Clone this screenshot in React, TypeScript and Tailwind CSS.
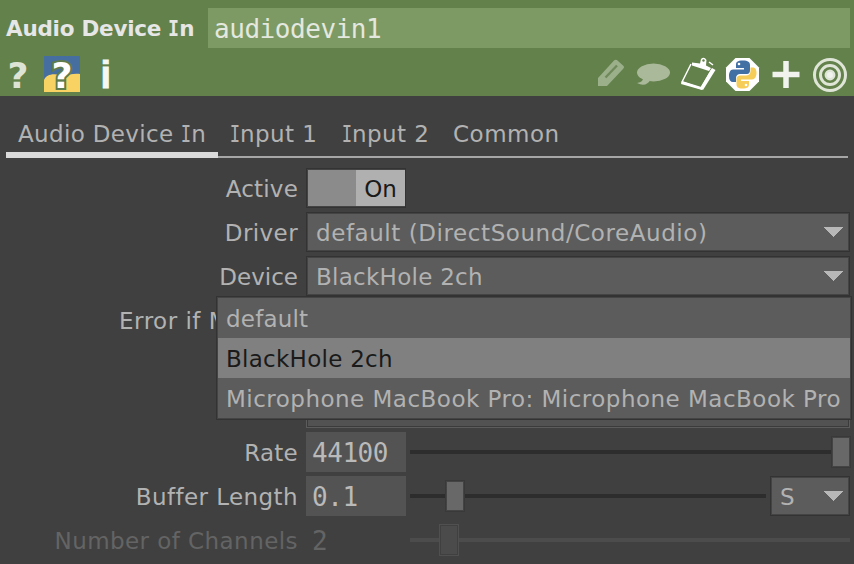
import React from "react";

const SANS = "font-['DejaVu_Sans',Verdana,sans-serif]";
const MONO = "font-['DejaVu_Sans_Mono',monospace] text-[26px] tracking-[-0.45px]";

/* Capital I with slab serifs, condensed to sit with the proportional letters */
function SlabI({ bold }: { bold?: boolean }) {
  return (
    <span className={`inline-block font-['DejaVu_Sans_Mono',monospace] tracking-normal ${bold ? "-mx-[1px] scale-x-85" : "-mx-[1.9px] scale-x-75"}`}>I</span>
  );
}

function Arrow() {
  return (
    <svg width="19" height="10" viewBox="0 0 19 10" className="mr-[6px] shrink-0" shapeRendering="crispEdges">
      <path d="M0 0H19L9.5 10Z" fill="#b8b8b8" />
    </svg>
  );
}

function Select({ children, className }: { children: React.ReactNode; className: string }) {
  return (
    <div className={`flex h-10 items-center justify-between border border-[#333333] bg-[#5c5c5c] pl-[9px] inset-ring inset-ring-[#444444] ${className}`}>
      <span className="pt-[2px] whitespace-nowrap">{children}</span>
      <Arrow />
    </div>
  );
}

function Row({ label, dim, spacing = "", children }: { label: string; dim?: boolean; spacing?: string; children?: React.ReactNode }) {
  return (
    <div className="flex h-11 items-center">
      <div className={`flex w-[298px] shrink-0 justify-end pt-[2px] whitespace-nowrap ${spacing} ${dim ? "text-[#646464]" : "text-[#b2b2b2]"}`}>{label}</div>
      <div className="ml-2 flex h-full w-[544px] items-center">{children}</div>
    </div>
  );
}

function Slider({ thumb, dim, className }: { thumb: string; dim?: boolean; className: string }) {
  return (
    <div className={`relative flex h-8 items-center ${className}`}>
      <div className={`h-1 w-full ${dim ? "bg-[#4c4c4c]" : "bg-[#2d2d2d]"}`} />
      <div className={`absolute top-0 h-8 w-5 border ${thumb} ${dim ? "border-[#505050] bg-[#4b4b4b] inset-ring inset-ring-[#404040]" : "border-[#393939] bg-[#686868] inset-ring inset-ring-[#444444]"}`} />
    </div>
  );
}

function Toolbar() {
  return (
    <div className="flex h-12 items-start justify-between">
      <svg width="120" height="48" viewBox="0 48 120 48">
        <g fontFamily="DejaVu Sans, sans-serif" fontWeight="700">
          <text x="7.5" y="88" fontSize="35" textLength="21" lengthAdjust="spacingAndGlyphs" fill="#dde4d6">?</text>
          <rect x="44" y="56" width="36" height="36" fill="#466f9f" />
          <path d="M44 80C46 75 52 73 60 75C67 76 72 73 80 74V92H44Z" fill="#f8d364" />
          <text x="51.5" y="88" fontSize="35" textLength="21" lengthAdjust="spacingAndGlyphs" fill="#ffffff" stroke="#5f7c4c" strokeWidth="4" paintOrder="stroke">?</text>
          <text x="100.5" y="88" fontSize="38" fontFamily="Liberation Sans, sans-serif" fill="#f5f7f3" stroke="#f5f7f3" strokeWidth="0.8">i</text>
        </g>
      </svg>
      <svg width="266" height="48" viewBox="588 48 266 48" fill="none">
        <path d="M598 78L614 60.500Q616 59 618 61L623 65.500Q625 67 623 69L607 86L598 86Z" fill="#9caf8b" />
        <path d="M605.500 77.500L617 65.500" stroke="#70895b" strokeWidth="2.400" />
        <ellipse cx="653.500" cy="72.500" rx="16.500" ry="9" fill="#a9b99a" />
        <path d="M643 77Q644 82 637 83Q646 88 651 79Z" fill="#a9b99a" />
        <path d="M691 64L682 82L701 88.500L712 69" stroke="#ffffff" strokeWidth="1.500" />
        <path d="M712 68L715.500 70L703 90L700 88Z" fill="#ffffff" />
        <path d="M692 62.500L700 63.500L701 59Q704 56 706.500 60L706 65.500L711 68L709 71L692 65.500Z" fill="#ffffff" />
        <path d="M709 62L713 65" stroke="#ffffff" strokeWidth="1.500" />
        <circle cx="703.500" cy="60.500" r="1.200" fill="#63814b" />
        <path d="M682 81L703 87.500L702 90L681 84Z" fill="#ffffff" />
        <path d="M735.5 58H749.5L759 67.5V81.5L749.5 91H735.5L726 81.5V67.5Z" fill="#ffffff" />
        <path d="M743 60.5C737 60.5 736 62 736 65V68H744V69.5H733C730 69.5 729 73 729 76C729 80 730.5 82 733 82H736V78C736 75.5 738 74 740 74H747C749 74 750 72.5 750 70V65C750 62 748 60.5 743 60.5Z" fill="#426fa4" />
        <path d="M742 88.500C748 88.500 749 87 749 84V81H741V79.500H752C755 79.500 756.500 76 756.500 73C756.500 69 755 67.500 752.500 67.500H750.500V71C750.500 74 748.500 75.500 746 75.500H740C738 75.500 736.500 77 736.500 79V84C736.500 87 738 88.500 742 88.500Z" fill="#f6cd58" />
        <circle cx="739" cy="64" r="1.300" fill="#ffffff" />
        <circle cx="746" cy="85" r="1.300" fill="#ffffff" />
        <path d="M772.500 74.500H799.500M786 61V88" stroke="#f0f2ee" strokeWidth="5.500" />
        <g stroke="#dfe6d8">
          <circle cx="830" cy="75" r="15.500" strokeWidth="3" />
          <circle cx="830" cy="75" r="9.500" strokeWidth="3" />
          <circle cx="830" cy="75" r="4.200" strokeWidth="2.500" fill="#f0f3ed" />
        </g>
      </svg>
    </div>
  );
}

export default function App() {
  return (
    <div className={`relative flex h-[564px] w-[854px] flex-col overflow-hidden bg-[#404040] text-[23px] leading-none text-[#b2b2b2] ${SANS}`}>
      <header className="h-24 shrink-0 bg-[#63814b]">
        <div className="flex h-12 items-end">
          <div className="flex h-10 w-[208px] items-center pt-[2px] pl-[6px] text-[21.5px] font-bold tracking-[-0.25px] whitespace-nowrap text-[#e6e6e6]">
            <span>Audio Device <SlabI bold />n</span>
          </div>
          <div className={`flex h-10 w-[642px] items-center bg-[#7d9a64] pt-[2px] pl-[6px] text-[#e4e8df] ${MONO}`}>audiodevin1</div>
        </div>
        <Toolbar />
      </header>

      <nav className="mx-[6px] mb-2 flex h-[62px] shrink-0 border-b-2 border-[#a6a6a6] whitespace-nowrap">
        <div className="-mb-[2px] flex w-[212px] items-center border-b-6 border-[#dadada] pt-5 pl-3 tracking-[0.35px]"><span>Audio Device <SlabI />n</span></div>
        <div className="flex w-[112px] items-center pt-4 pl-3 tracking-[0.4px]"><span><SlabI />nput 1</span></div>
        <div className="flex w-[112px] items-center pt-4 pl-3 tracking-[0.4px]"><span><SlabI />nput 2</span></div>
        <div className="flex items-center pt-4 pl-[11px] tracking-[0.5px]"><span>Common</span></div>
      </nav>

      <main className="flex flex-col">
        <Row label="Active" spacing="tracking-[0.2px]">
          <div className="flex h-10 w-[100px] border border-[#333333] bg-[#8b8b8b] inset-ring inset-ring-[#444444]">
            <div className="my-px ml-auto flex w-[49px] items-center justify-center bg-[#b0b0b0] pt-[2px] text-[#1a1a1a]">On</div>
          </div>
        </Row>
        <Row label="Driver" spacing="tracking-[0.4px]"><Select className="w-full tracking-[0.57px]">default (DirectSound/CoreAudio)</Select></Row>
        <Row label="Device"><Select className="w-full tracking-[0.27px]">BlackHole 2ch</Select></Row>
        <Row label="Error if Missing" spacing="tracking-[0.5px]" />
        <Row label="" />
        <Row label=""><div className="h-10 w-full border border-[#5c5c5c] bg-[#525252] inset-ring inset-ring-[#3b3b3b]" /></Row>
        <Row label="Rate" spacing="tracking-[0.25px]">
          <div className={`flex h-10 w-[100px] items-center bg-[#535353] pt-[2px] pl-[6px] text-[#bababa] ${MONO}`}>44100</div>
          <Slider thumb="left-[421px]" className="ml-1 w-[440px]" />
        </Row>
        <Row label="Buffer Length" spacing="tracking-[0.42px]">
          <div className={`flex h-10 w-[100px] items-center bg-[#535353] pt-[2px] pl-[6px] text-[#bababa] ${MONO}`}>0.1</div>
          <Slider thumb="left-[35px]" className="ml-1 w-[356px]" />
          <Select className="ml-1 w-20">S</Select>
        </Row>
        <Row label="Number of Channels" dim spacing="tracking-[0.44px]">
          <div className={`flex h-10 w-[100px] items-center pt-[2px] pl-[6px] text-[#646464] ${MONO}`}>2</div>
          <Slider thumb="left-[29px]" dim className="ml-1 w-[440px]" />
        </Row>
      </main>

      <div className="absolute top-[296px] left-[216px] w-[636px] border border-[#333333] bg-[#5c5c5c] p-px whitespace-nowrap inset-ring inset-ring-[#444444]">
        <div className="flex h-10 items-center pt-[2px] pl-2 tracking-[0.2px]">default</div>
        <div className="flex h-10 items-center bg-[#808080] pt-[2px] pl-2 tracking-[0.27px] text-[#1a1a1a]">BlackHole 2ch</div>
        <div className="flex h-10 items-center pt-[2px] pl-2 tracking-[0.485px]">Microphone MacBook Pro: Microphone MacBook Pro</div>
      </div>
    </div>
  );
}
